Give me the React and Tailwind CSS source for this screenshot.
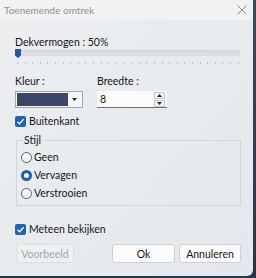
import React from "react";

function Check() {
  return (
    <div className="w-[11px] h-[11px] rounded-[2px] bg-[#1d64b3] flex items-center justify-center">
      <svg width="9" height="9" viewBox="0 0 9 9">
        <path d="M1.5 4.8 L3.6 6.8 L7.6 2.2" fill="none" stroke="white" strokeWidth="1.3" />
      </svg>
    </div>
  );
}

function Radio({ on, label }) {
  return (
    <div className="flex items-center h-[18px]">
      {on ? (
        <div className="w-[11px] h-[11px] rounded-full bg-[#1d5fae] flex items-center justify-center">
          <div className="w-[5px] h-[5px] rounded-full bg-white" />
        </div>
      ) : (
        <div className="w-[11px] h-[11px] rounded-full border border-[#5c5f63] bg-[#f7f8f9]" />
      )}
      <span className="ml-[2px]">{label}</span>
    </div>
  );
}

export default function App() {
  const ticks = Array.from({ length: 30 });
  return (
    <div
      className="w-[256px] h-[278px] bg-gradient-to-b from-[#3c4a5c] to-[#2a3442] flex text-[10.5px] text-[#161616] leading-[14px]"
      style={{ fontFamily: 'Lato, "Noto Sans", sans-serif' }}
    >
      <div className="w-[253px] h-[276px] flex flex-col bg-gradient-to-br from-[#eceef0] via-[#e8ebee] to-[#e4e8ec] rounded-br-[6px]">
        {/* title bar */}
        <div className="h-[20px] flex items-center justify-between pl-[4px] pr-[6px] bg-[#f1f2f3]">
          <span className="text-[#8e9092] text-[10px]">Toenemende omtrek</span>
          <svg width="10" height="10" viewBox="0 0 10 10">
            <path d="M0.5 0.5 L9.5 9.5 M9.5 0.5 L0.5 9.5" stroke="#8a8c8e" strokeWidth="1" />
          </svg>
        </div>

        <div className="flex flex-col pl-[15px] pr-[12px]">
          <div className="mt-[15px]">Dekvermogen : 50%</div>
          {/* slider */}
          <div className="relative h-[9px] w-[225px]">
            <div className="absolute left-0 right-0 top-[1px] h-[6px] bg-[#dadde1] border-t border-[#cfd2d6]" />
            <svg className="absolute left-[0px] top-[0px]" width="6" height="9" viewBox="0 0 6 9">
              <path d="M0 0 H6 V6.5 L3 9 L0 6.5 Z" fill="#1c5aa6" />
            </svg>
          </div>
          <div className="flex justify-between w-[222px] ml-[2px] mt-[4px] h-[2px]">
            {ticks.map((_, i) => (
              <div key={i} className="w-[1px] h-[2px] bg-[#b9bec4]" />
            ))}
          </div>

          {/* Kleur / Breedte */}
          <div className="flex mt-[10px]">
            <div className="flex flex-col w-[82px]">
              <div>Kleur :</div>
              <div className="mt-[3px] w-[68px] h-[17px] border border-[#a4a8ad] bg-[#f4f5f6] flex items-center p-[1px]">
                <div className="w-[51px] h-full bg-[#3e4667]" />
                <div className="flex-1 flex items-center justify-center">
                  <svg width="5" height="3" viewBox="0 0 5 3">
                    <path d="M0 0 H5 L2.5 3 Z" fill="#222" />
                  </svg>
                </div>
              </div>
            </div>
            <div className="flex flex-col">
              <div>Breedte :</div>
              <div className="mt-[3px] w-[70px] h-[17px] bg-[#fbfbfc] border-b border-[#6d7075] flex items-center">
                <span className="pl-[3px] flex-1">8</span>
                <div className="flex flex-col mr-[2px] gap-[1px]">
                  <div className="w-[11px] h-[7px] border border-[#c4c7cb] bg-[#f3f4f5] flex items-center justify-center">
                    <svg width="5" height="3" viewBox="0 0 5 3"><path d="M0 3 H5 L2.5 0 Z" fill="#222" /></svg>
                  </div>
                  <div className="w-[11px] h-[7px] border border-[#c4c7cb] bg-[#f3f4f5] flex items-center justify-center">
                    <svg width="5" height="3" viewBox="0 0 5 3"><path d="M0 0 H5 L2.5 3 Z" fill="#222" /></svg>
                  </div>
                </div>
              </div>
            </div>
          </div>

          {/* Buitenkant */}
          <div className="flex items-center mt-[7px] h-[12px]">
            <Check />
            <span className="ml-[3px]">Buitenkant</span>
          </div>

          {/* Stijl group */}
          <div className="relative mt-[13px] ml-[1px] w-[225px] h-[66px] border border-[#d3d6da] pl-[4px] pt-[7px]">
            <span className="absolute -top-[8px] left-[5px] px-[2px] bg-[#e9ecee]">Stijl</span>
            <div className="flex flex-col">
              <Radio label="Geen" />
              <Radio on label="Vervagen" />
              <Radio label="Verstrooien" />
            </div>
          </div>

          {/* Meteen bekijken */}
          <div className="flex items-center mt-[17px] h-[12px]">
            <Check />
            <span className="ml-[3px]">Meteen bekijken</span>
          </div>

          {/* Buttons */}
          <div className="flex mt-[9px] h-[19px]">
            <div className="ml-[1px] w-[58px] h-full border border-[#dcdfe2] bg-[#eef0f2] rounded-[3px] flex items-center justify-center text-[#a3a6a9]">
              Voorbeeld
            </div>
            <div className="ml-[38px] w-[63px] h-full border border-[#cdd0d4] bg-[#fbfbfc] rounded-[3px] flex items-center justify-center">
              Ok
            </div>
            <div className="ml-[4px] w-[62px] h-full border border-[#cdd0d4] bg-[#fbfbfc] rounded-[3px] flex items-center justify-center">
              Annuleren
            </div>
          </div>
        </div>
      </div>
    </div>
  );
}
